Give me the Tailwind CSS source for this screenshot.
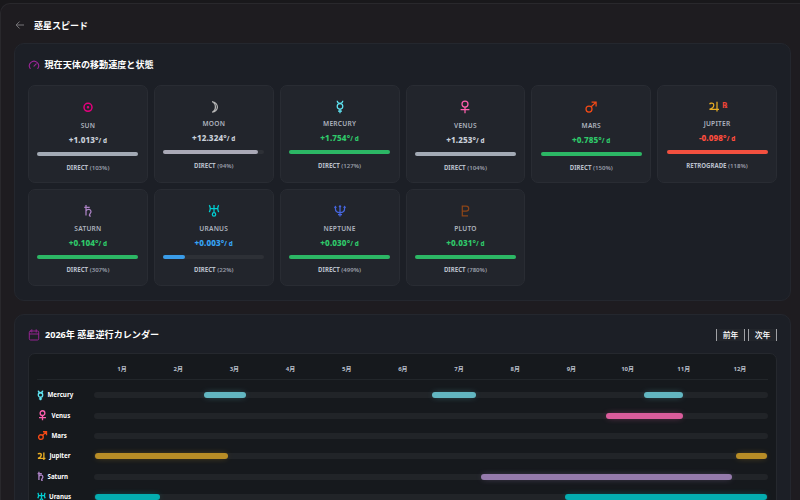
<!DOCTYPE html>
<html lang="ja">
<head>
<meta charset="utf-8">
<title>惑星スピード</title>
<script src="https://cdn.jsdelivr.net/npm/@tailwindcss/browser@4"></script>
</head>
<body class="w-[800px] h-[500px] overflow-hidden bg-[#19181b] pt-[3px] font-['Noto_Sans','Noto_Sans_CJK_JP',sans-serif] text-white">
<div class="h-[497px] overflow-hidden border border-b-0 border-[#29282c] rounded-tl-[10px] bg-[#1e1c20] pl-[13px] pr-[9px] border-r-0">
  <header class="flex items-center h-[39px] pt-[4px] pl-[1px]">
    <svg class="w-[10px] h-[10px] mr-[9px] -mt-[2px]" viewBox="0 0 10 10" fill="none" stroke="#777579" stroke-width="1"><path d="M9 5H1.3M4.6 1.5L1.1 5l3.5 3.5"/></svg>
    <h1 class="text-[9px] leading-[14px] font-bold whitespace-nowrap">惑星スピード</h1>
  </header>
  <section class="h-[258px] rounded-[10px] border border-[#24272e] bg-[#1c1f26] px-[13px] pt-[14px]">
    <h2 class="flex items-center h-[14px] text-[9.1px] leading-[14px] font-bold whitespace-nowrap">
      <svg class="w-[12px] h-[11px] mr-[4.5px] -mt-[2px]" viewBox="0 0 12 11" fill="none" stroke="#9a2596" stroke-width="1.1" stroke-linecap="round"><path d="M2.2 9.5A4.6 4.6 0 1 1 9.8 9.5M6 7.2L8.2 4.8"/></svg>現在天体の移動速度と状態
    </h2>
    <div id="cards" class="mt-[13px] grid grid-cols-6 gap-x-[6px] gap-y-[6px]"></div>
  </section>
  <section class="mt-[13px] h-[230px] rounded-[10px] border border-[#24272e] bg-[#1c1f26] px-[13px] pt-[12px]">
    <div class="flex items-center justify-between h-[16px]">
      <h2 class="flex items-center text-[9.1px] leading-[14px] font-bold whitespace-nowrap">
        <svg class="w-[12px] h-[12px] mr-[5px]" viewBox="0 0 12 12" fill="none" stroke="#92258f" stroke-width="1" stroke-linecap="round"><rect x="1.3" y="2" width="9.4" height="9" rx="1.2"/><path d="M1.3 5h9.4M3.8 .7v2.4M8.2 .7v2.4"/></svg>2026年 惑星逆行カレンダー
      </h2>
      <div class="flex gap-[3px] text-[7.8px] leading-[12px] font-medium">
        <button class="w-[29px] h-[12px] border-x border-[#a0a1a5] bg-[#22252b]">前年</button>
        <button class="w-[29px] h-[12px] border-x border-[#a0a1a5] bg-[#22252b]">次年</button>
      </div>
    </div>
    <div class="mt-[10px] h-[180px] rounded-[7px] border border-[#25282e] bg-[#16191d] px-[8px]">
      <div id="months" class="grid grid-cols-12 h-[26px] pl-[57px] pt-[10px] border-b border-[#22262a] text-[6px] leading-[10px] text-center font-bold text-[#b9bfca]"></div>
      <div id="rows" class="pt-[5px]"></div>
    </div>
  </section>
</div>
<script>
const glyphs = {
  Sun: '<circle cx="7" cy="7.3" r="4"/><circle cx="7" cy="7.3" r=".5" fill="currentColor"/>',
  Moon: '<path d="M5.2 1.8a5.2 5.2 0 0 1 0 10.4 5.6 5.6 0 0 0 3.2-5.2 5.6 5.6 0 0 0-3.2-5.2z"/>',
  Mercury: '<path d="M4.2 .8c.2 2 1.2 2.6 2.8 2.6s2.6-.6 2.8-2.6M7 9v4.2M5 11.2h4"/><circle cx="7" cy="6.3" r="2.8"/>',
  Venus: '<circle cx="7" cy="4" r="3"/><path d="M7 7v6.2M2.6 9.6h8.8"/>',
  Mars: '<circle cx="5" cy="9" r="3"/><path d="M7.2 6.8l4.6-4.4M7.6 2.2h4.5v4.4"/>',
  Jupiter: '<path d="M2.6 4.2c.6-1.5 4.2-1.4 4.2.7 0 2.3-1.8 3.6-4.3 4.4H12M10 1.8v9.8"/>',
  Saturn: '<path d="M3.3 3.3h5.4M5 1v10.6M5 6.8c1.6-2.4 5-1.8 5 .8 0 1.8-1.6 2.3-1.6 3.6 0 .7.6.9 1.4.8"/>',
  Uranus: '<path d="M2.2 1.2c1.4 1.4 1.4 5.2 0 6.8M11.8 1.2c-1.4 1.4-1.4 5.2 0 6.8M3.3 4.6h7.4M7 1v7.6"/><circle cx="7" cy="10.4" r="1.7"/>',
  Neptune: '<path d="M2.4 3v1.4c0 2.8 1.6 4.2 4.6 4.2s4.6-1.4 4.6-4.2V3M7 2v10.5M5 10.6h4M1.5 3.8l.9-1.3.9 1.3M6.1 3.2L7 1.9l.9 1.3M10.7 3.8l.9-1.3.9 1.3"/>',
  Pluto: '<path d="M4.3 2h3.8a2.6 2.6 0 0 1 0 5.2H4.3M4.3 1.5v10.3H10"/>'
};
const icon = (name, color, cls, sw) => `<svg class="${cls}" viewBox="0 0 14 14" fill="none" stroke="currentColor" stroke-width="${sw}" style="color:${color}">${glyphs[name]}</svg>`;
const planets = [
  ['Sun','+1.013','DIRECT','103%',100,'#e6007e','#c8ced8','#a3aab5',2],
  ['Moon','+12.324','DIRECT','94%',94,'#b4b4b4','#c8ced8','#aaa9b7',0],
  ['Mercury','+1.754','DIRECT','127%',100,'#5fe4f2','#2fc96a','#2cb765',0],
  ['Venus','+1.253','DIRECT','104%',100,'#ff5fae','#c8ced8','#a3aab5',2],
  ['Mars','+0.785','DIRECT','150%',100,'#f44a16','#2fc96a','#2cb765',2],
  ['Jupiter','-0.098','RETROGRADE','118%',100,'#e9ae24','#ff4d3e','#f3503f',0],
  ['Saturn','+0.104','DIRECT','307%',100,'#ad83c6','#2fc96a','#2cb765',1],
  ['Uranus','+0.003','DIRECT','22%',22,'#00ced1','#36a3f5','#3a9ce8',1],
  ['Neptune','+0.030','DIRECT','499%',100,'#4666de','#2fc96a','#2cb765',1],
  ['Pluto','+0.031','DIRECT','780%',100,'#8b4518','#2fc96a','#2cb765',1]
];
document.getElementById('cards').innerHTML = planets.map(([n,v,s,p,w,c,vc,bc,lower],i) => `
  <article class="${i<6?'h-[98px]':'h-[97px]'} rounded-[7px] border border-[#292c33] bg-[#22252c] px-[8px] pt-[13px] flex flex-col items-center">
    <div class="h-[16px] flex items-center gap-[1px]">${icon(n,c,'w-[14px] h-[14px]',n==='Sun'?1.5:1.25)}${s==='RETROGRADE'?'<span class="text-[8px] leading-[8px] -mt-[4px] font-bold font-[\'DejaVu_Sans\'] text-[#f04438]">℞</span>':''}</div>
    <div class="${lower===2?'mt-[6px]':lower===1?'mt-[5px]':'mt-[4px]'} text-[6.6px] leading-[10px] font-semibold tracking-[.25px] text-[#aeb4bf] uppercase">${n}</div>
    <div class="mt-[3px] text-[8.1px] leading-[12px] font-extrabold tracking-[.1px] whitespace-nowrap" style="color:${vc}">${v}°<span class="text-[6.3px]">/ d</span></div>
    <div class="mt-[5px] h-[4px] w-[101px] rounded-full bg-[#2d3036] shrink-0"><div class="h-full rounded-full" style="width:${w}%;background:${bc}"></div></div>
    <div class="${lower===1?'mt-[5.5px]':'mt-[6.5px]'} text-[6.1px] leading-[10px] font-bold text-[#b9bfca] whitespace-nowrap">${s} <span class="font-semibold text-[#989da8]">(${p})</span></div>
  </article>`).join('');
document.getElementById('months').innerHTML = Array.from({length:12},(_,i)=>`<span>${i+1}月</span>`).join('');
const calendar = [
  ['Mercury','#5fe4f2','#62b6c1',[[110,42],[338,44],[550,39]],-3,3],
  ['Venus','#ff5fae','#da5c9b',[[512,77]],-1,5],
  ['Mars','#f44a16','#f44a16',[],-1,5],
  ['Jupiter','#e9ae24','#b88d26',[[1,133],[642,31]],-2,4],
  ['Saturn','#ad83c6','#957aac',[[387,251]],-3,3],
  ['Uranus','#00ced1','#04adb0',[[1,65],[471,202]],-2,3.5]
];
document.getElementById('rows').innerHTML = calendar.map(([n,c,b,bars,x,gap]) => `
  <div class="flex items-center h-[20.4px]">
    <div class="w-[57px] flex items-center text-[6.2px] leading-[10px] font-bold"><span class="shrink-0" style="margin-left:${x+1}px;margin-right:${gap-1.5}px">${icon(n,c,'w-[11px] h-[11px]',1.7)}</span><span>${n}</span></div>
    <div class="relative flex-1 h-[6px] rounded-full bg-[#212428]">${bars.map(([l,w])=>`<i class="absolute top-0 h-[6px] rounded-full shadow-[0_0_6px_-2px_currentColor]" style="left:${l}px;width:${w}px;background:${b};color:${b}"></i>`).join('')}</div>
  </div>`).join('');
</script>
</body>
</html>
